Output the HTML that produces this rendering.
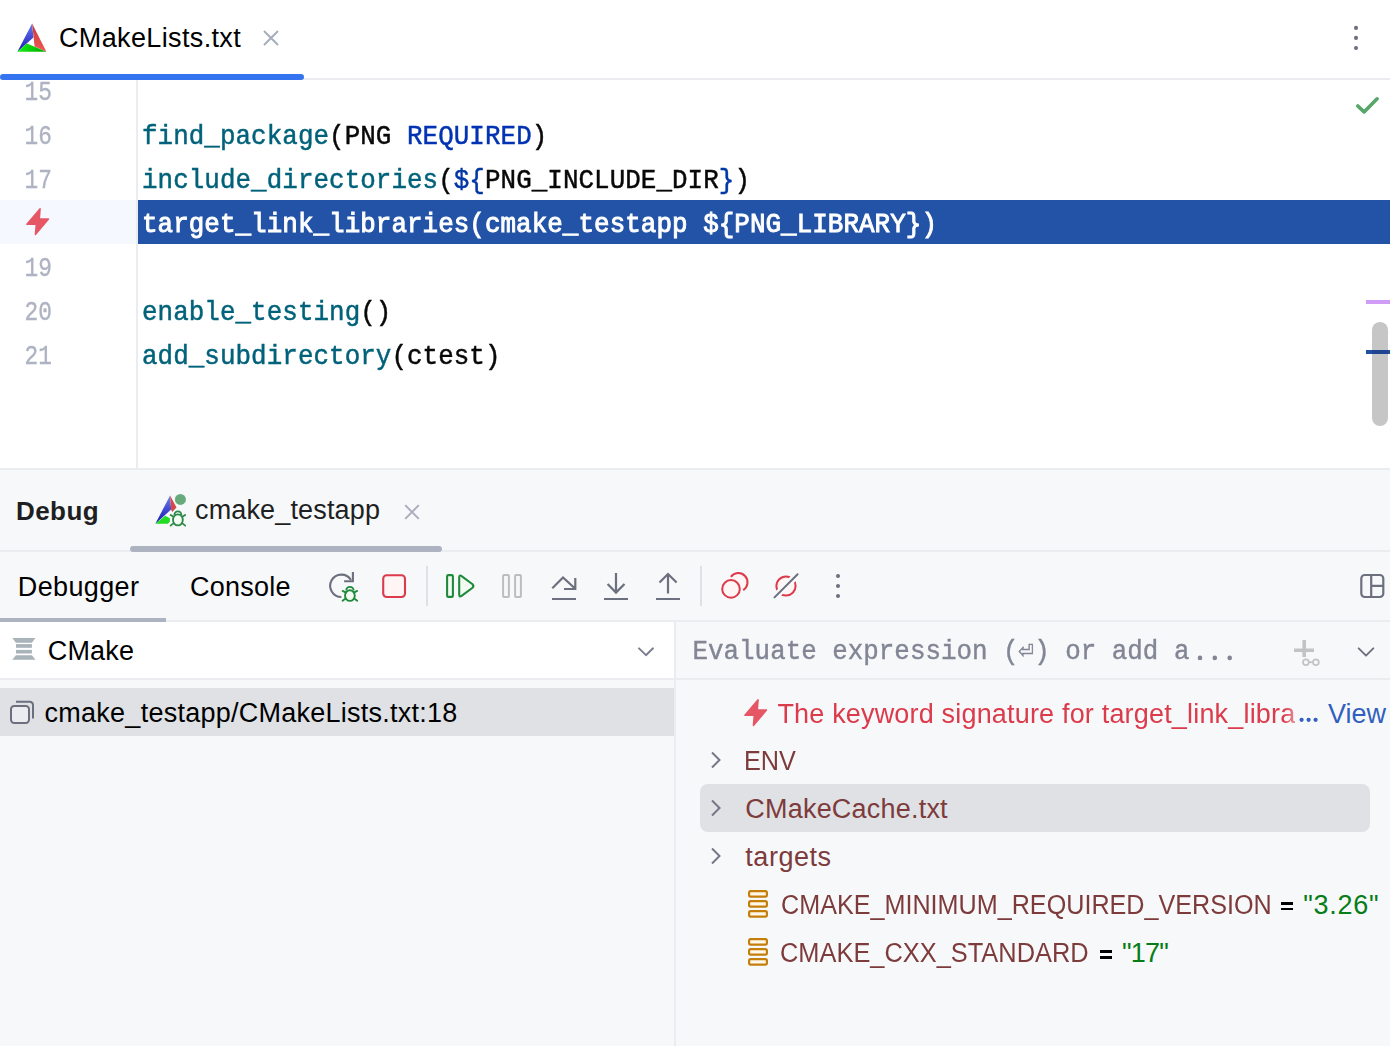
<!DOCTYPE html>
<html><head><meta charset="utf-8">
<style>
*{margin:0;padding:0;box-sizing:border-box}
html,body{width:1390px;height:1046px;overflow:hidden;background:#fff;font-family:"Liberation Sans",sans-serif;color:#000}
.abs{position:absolute}
.mono{font-family:"Liberation Mono",monospace}
#tabbar{position:absolute;z-index:2;left:0;top:0;width:1390px;height:80px;background:#fff;border-bottom:2px solid #ebecf0}
#editor{position:absolute;left:0;top:79px;width:1390px;height:390px;background:#fff}
.gutter{position:absolute;left:0;top:0;width:136px;height:390px}
.gline{position:absolute;left:136px;top:0;width:2px;height:390px;background:#ebecf0}
.ln{position:absolute;left:0;width:52px;text-align:right;transform:scale(0.88,1.05);transform-origin:51px 28.9px;-webkit-text-stroke:0.35px #aeb3c2;font-family:"Liberation Mono",monospace;font-size:25.9px;color:#aeb3c2;line-height:44px;height:44px}
.code{position:absolute;left:142px;letter-spacing:0.06px;-webkit-text-stroke:0.45px currentColor;transform:scaleY(1.08);transform-origin:0 28.9px;font-family:"Liberation Mono",monospace;font-size:25.88px;line-height:44px;height:44px;white-space:pre;color:#080808}
.fn{color:#00627a}
.kw{color:#0033b3}
.dl{color:#0037a6}
#debug{position:absolute;left:0;top:468px;width:1390px;height:578px;background:#f7f8fa;border-top:2px solid #ebecf0}
.ui{font-size:27px;white-space:pre;line-height:30px}
</style></head><body>
<div id="tabbar">
  <svg class="abs" style="left:12px;top:18px" width="40" height="40" viewBox="12 18 40 40">
    <defs>
      <linearGradient id="gb1" x1="0" y1="0" x2="0" y2="1"><stop offset="0" stop-color="#6a7cf0"/><stop offset="1" stop-color="#1a1ab4"/></linearGradient>
      <linearGradient id="gr1" x1="0" y1="0" x2="0" y2="1"><stop offset="0" stop-color="#c83838"/><stop offset="1" stop-color="#ee5858"/></linearGradient>
      <linearGradient id="gg1" x1="0" y1="0" x2="1" y2="0"><stop offset="0" stop-color="#14f014"/><stop offset="1" stop-color="#00a800"/></linearGradient>
    </defs>
    <polygon points="32.1,23.4 33.4,37.6 17.4,51.7" fill="url(#gb1)"/>
    <polygon points="32.1,23.4 46.4,51.7 34.6,46.5" fill="url(#gr1)"/>
    <polygon points="17.4,51.7 26.9,43.6 46.4,51.7" fill="url(#gg1)"/>
  </svg>
  <div class="abs ui" style="left:59px;top:23.2px;letter-spacing:0.36px;color:#000">CMakeLists.txt</div>
  <svg class="abs" style="left:262px;top:29px" width="18" height="18" viewBox="0 0 18 18"><path d="M2 2L16 16M16 2L2 16" stroke="#a8adbd" stroke-width="2"/></svg>
  <div class="abs" style="left:0;top:74px;width:304px;height:6px;background:#3574f0;border-radius:3px"></div>
  <svg class="abs" style="left:1350px;top:25px" width="12" height="28" viewBox="0 0 12 28"><circle cx="6" cy="2.9" r="2.05" fill="#6c707e"/><circle cx="6" cy="12.9" r="2.05" fill="#6c707e"/><circle cx="6" cy="23" r="2.05" fill="#6c707e"/></svg>
</div>
<div id="editor">
  <div class="abs" style="left:0;top:121px;width:136px;height:44px;background:#f5f8fe"></div>
  <div class="gline"></div>
  <div class="ln" style="top:-8.5px">15</div>
  <div class="ln" style="top:35.5px">16</div>
  <div class="ln" style="top:79.5px">17</div>
  <svg class="abs" style="left:25.2px;top:128.2px" width="26" height="30" viewBox="-1 -1 26 30"><path d="M14.1 0.8L13.3 11.1H22.5L9.4 26.5L10.3 16.2H0.9Z" fill="#e55765" stroke="#e55765" stroke-width="1.5" stroke-linejoin="round"/></svg>
  <div class="ln" style="top:167.5px">19</div>
  <div class="ln" style="top:211.5px">20</div>
  <div class="ln" style="top:255.5px">21</div>

  <div class="code" style="top:36px"><span class="fn">find_package</span>(PNG <span class="kw">REQUIRED</span>)</div>
  <div class="code" style="top:80px"><span class="fn">include_directories</span>(<span class="dl">${</span>PNG_INCLUDE_DIR<span class="dl">}</span>)</div>
  <div class="abs" style="left:138px;top:121px;width:1252px;height:44px;background:#2253a7"></div>
  <div class="code" style="top:124px;color:#fff;-webkit-text-stroke:0.9px #fff">target_link_libraries(cmake_testapp ${PNG_LIBRARY})</div>
  <div class="code" style="top:212px"><span class="fn">enable_testing</span>()</div>
  <div class="code" style="top:256px"><span class="fn">add_subdirectory</span>(ctest)</div>

  <svg class="abs" style="left:1345px;top:6px" width="45" height="40" viewBox="1345 85 45 40"><path d="M1357.8 106 L1364.1 111.9 L1377.1 98.8" stroke="#55a76a" stroke-width="3.6" fill="none" stroke-linecap="round" stroke-linejoin="round"/></svg>
  <div class="abs" style="left:1366px;top:221px;width:24px;height:3.8px;background:#cf9cf6"></div>
  <div class="abs" style="left:1372px;top:243px;width:16px;height:104px;background:#c6c6c6;border-radius:8px"></div>
  <div class="abs" style="left:1366px;top:271px;width:24px;height:3.8px;background:#2150a3"></div><div class="abs" style="left:1372px;top:271px;width:16px;height:3.8px;background:#1d4590"></div>
</div>
<div id="debug"></div>
<!-- debug header -->
<div class="abs" style="left:0;top:550px;width:1390px;height:2px;background:#ebecf0"></div>
<div class="abs ui" style="left:16px;top:495.6px;font-size:26px;font-weight:bold;letter-spacing:0.42px;color:#1e1f22">Debug</div>
<svg class="abs" style="left:150px;top:490px" width="40" height="40" viewBox="150 490 40 40">
  <defs>
    <linearGradient id="gb2" x1="0" y1="0" x2="0" y2="1"><stop offset="0" stop-color="#6e80f0"/><stop offset="1" stop-color="#1414b0"/></linearGradient>
  </defs>
  <polygon points="170.1,495.4 171.1,509.5 155.4,523.7" fill="url(#gb2)"/>
  <polygon points="170.1,495.4 176.5,507.5 172.2,512 171.1,509.5" fill="#d44848"/>
  <polygon points="155.4,523.7 165.3,515.8 169.9,518.2 169.9,521.6 167.8,523.7" fill="#22dd22"/>
  <circle cx="180.4" cy="499.4" r="5.5" fill="#67ab7d"/>
  <ellipse cx="177.9" cy="519.9" rx="4.9" ry="5.5" fill="#f2fcf3" stroke="#2a8a45" stroke-width="1.8"/>
  <path d="M174.4 514.9 A3.5 3.5 0 0 1 181.4 514.9" fill="none" stroke="#2a8a45" stroke-width="1.8"/>
  <path d="M170.6 514.9 L173.2 516.6 M185.2 514.9 L182.6 516.6 M170.6 525.6 L173.4 523.4 M185.2 525.6 L182.4 523.4" stroke="#2a8a45" stroke-width="1.8" stroke-linecap="round"/>
</svg>
<div class="abs ui" style="left:195px;top:495px;letter-spacing:0.15px;color:#1e1f22">cmake_testapp</div>
<svg class="abs" style="left:404px;top:504px" width="16" height="16" viewBox="0 0 16 16"><path d="M1.2 1.2L14.8 14.8M14.8 1.2L1.2 14.8" stroke="#a8adbd" stroke-width="1.9"/></svg>
<div class="abs" style="left:130px;top:546px;width:312px;height:6px;background:#aeb3c2;border-radius:3px"></div>
<!-- toolbar -->
<div class="abs ui" style="left:17.8px;top:572px;letter-spacing:0.37px;color:#000">Debugger</div>
<div class="abs ui" style="left:190px;top:572px;letter-spacing:0.23px;color:#000">Console</div>
<div class="abs" style="left:0;top:620px;width:1390px;height:2px;background:#ebecf0"></div>
<div class="abs" style="left:0;top:618px;width:166px;height:4px;background:#aeb3c2"></div>
<svg class="abs" style="left:0;top:551px" width="1390" height="70" viewBox="0 551 1390 70">
  <!-- rerun -->
  <path d="M341.4 597 A11.2 11.2 0 1 1 350.95 579.95" fill="none" stroke="#6c707e" stroke-width="2.1"/>
  <path d="M344.1 581.2 H352.9 V572" fill="none" stroke="#6c707e" stroke-width="2.1"/>
  <ellipse cx="349.9" cy="595.6" rx="4.9" ry="5.3" fill="#f2fcf3" stroke="#208a3c" stroke-width="1.9"/>
  <path d="M346.2 590.6 A3.7 3.7 0 0 1 353.6 590.6" fill="none" stroke="#208a3c" stroke-width="1.9"/>
  <path d="M342.6 590.9 L346 592.6 M357.2 590.9 L353.8 592.6 M342.6 600.8 L345.6 598.6 M357.2 600.8 L354.2 598.6" stroke="#208a3c" stroke-width="1.9" stroke-linecap="round"/>
  <!-- stop -->
  <rect x="383.2" y="575.2" width="21.8" height="21.8" rx="3.5" fill="#fff5f5" stroke="#db3b4b" stroke-width="2.1"/>
  <rect x="426" y="566" width="2" height="40" fill="#dfe1e5"/>
  <!-- resume -->
  <rect x="447.1" y="575.1" width="5.8" height="21.8" rx="1.2" fill="#f2fcf3" stroke="#208a3c" stroke-width="2.1"/>
  <path d="M459.2 577.5 L459.2 594.5 Q459.2 597.5 461.6 595.8 L472.5 587.8 Q474.3 586 472.5 584.2 L461.6 576.2 Q459.2 574.5 459.2 577.5Z" fill="#f2fcf3" stroke="#208a3c" stroke-width="2.1"/>
  <!-- pause disabled -->
  <rect x="503.1" y="575.1" width="5.8" height="21.8" rx="1" fill="none" stroke="#bdbdbd" stroke-width="2"/>
  <rect x="515.1" y="575.1" width="5.8" height="21.8" rx="1" fill="none" stroke="#bdbdbd" stroke-width="2"/>
  <!-- step over -->
  <path d="M552.3 588.2 L563 577.5 L575.3 588.8 M564 589 L575.3 589 L575.3 578" fill="none" stroke="#6c707e" stroke-width="2.2"/>
  <path d="M552 599 H576 M604 599 H628 M656 599 H680" stroke="#6c707e" stroke-width="2.2"/>
  <!-- step into -->
  <path d="M616 573 V593 M607.6 584 L616 592.6 L624.5 584" fill="none" stroke="#6c707e" stroke-width="2.2"/>
  <!-- step out -->
  <path d="M668 593.4 V574 M659.5 582.5 L668 574 L676.6 582.5" fill="none" stroke="#6c707e" stroke-width="2.2"/>
  <rect x="700" y="566" width="2" height="40" fill="#dfe1e5"/>
  <!-- view breakpoints -->
  <path d="M730.86 576.9 A9.2 9.2 0 1 1 743.24 590.06" fill="#fff5f5" stroke="#db3b4b" stroke-width="2"/>
  <circle cx="731" cy="588.9" r="8.8" fill="#fff5f5" stroke="#db3b4b" stroke-width="2"/>
  <!-- mute -->
  <circle cx="786" cy="586" r="9.6" fill="#fff5f5" stroke="#db3b4b" stroke-width="2"/>
  <path d="M774.5 597.4 L797.6 574.3" stroke="#f7f8fa" stroke-width="7"/>
  <path d="M774.5 597.4 L797.6 574.3" stroke="#6c707e" stroke-width="2" stroke-linecap="round"/>
  <!-- more -->
  <circle cx="838" cy="576" r="2" fill="#6c707e"/><circle cx="838" cy="586" r="2" fill="#6c707e"/><circle cx="838" cy="596" r="2" fill="#6c707e"/>
  <!-- layout -->
  <rect x="1361.3" y="575" width="22" height="22" rx="3.5" fill="none" stroke="#6c707e" stroke-width="2.2"/>
  <path d="M1371.2 575 V597 M1371.2 585.8 H1383" stroke="#6c707e" stroke-width="2.2"/>
</svg>
<!-- panels -->
<div class="abs" style="left:0;top:622px;width:674px;height:56px;background:#fff"></div>
<div class="abs" style="left:0;top:678px;width:674px;height:2px;background:#ebecf0"></div>
<div class="abs" style="left:676px;top:678px;width:714px;height:2px;background:#ebecf0"></div>
<div class="abs" style="left:674px;top:622px;width:2px;height:424px;background:#ebecf0"></div>
<svg class="abs" style="left:10px;top:636px" width="28" height="26" viewBox="0 0 28 26">
  <path d="M2.3 2.1 H25.5 L21.9 6.8 H5.9Z M2.3 23.8 H25.5 L21.9 19.2 H5.9Z" fill="#a8b3ba"/>
  <rect x="6" y="8.1" width="15.9" height="3.7" fill="#a8b3ba"/>
  <rect x="6" y="13.9" width="15.9" height="3.6" fill="#a8b3ba"/>
</svg>
<div class="abs ui" style="left:47.8px;top:635.6px;letter-spacing:0.15px;color:#000">CMake</div>
<svg class="abs" style="left:636px;top:644px" width="20" height="14" viewBox="0 0 20 14"><path d="M3 4.3L9.95 11.2L17 4.3" fill="none" stroke="#7a7e8c" stroke-width="1.9" stroke-linecap="round" stroke-linejoin="round"/></svg>
<div class="abs" style="left:0;top:688px;width:674px;height:48px;background:#dfe1e5"></div>
<svg class="abs" style="left:8px;top:698px" width="30" height="30" viewBox="0 0 30 30">
  <path d="M8 3.8 H21.5 Q25 3.8 25 7.3 V20.5" fill="none" stroke="#6c707e" stroke-width="2"/>
  <rect x="3" y="8" width="18" height="17" rx="3.2" fill="#ebecf0" stroke="#6c707e" stroke-width="2"/>
</svg>
<div class="abs ui" style="left:44.6px;top:698.4px;letter-spacing:0.25px;color:#000">cmake_testapp/CMakeLists.txt:18</div>
<!-- eval -->
<div class="abs mono" style="left:692.5px;top:636.8px;transform:scaleY(1.06);transform-origin:0 21.9px;font-size:25.88px;line-height:30px;white-space:pre;color:#818594;-webkit-text-stroke:0.4px #818594">Evaluate expression (&#x23CE;) or add a</div>
<svg class="abs" style="left:1190px;top:650px" width="50" height="16" viewBox="1190 650 50 16"><circle cx="1200" cy="657.9" r="2.3" fill="#818594"/><circle cx="1214.8" cy="657.9" r="2.3" fill="#818594"/><circle cx="1229.7" cy="657.9" r="2.3" fill="#818594"/></svg>
<svg class="abs" style="left:1290px;top:636px" width="32" height="32" viewBox="0 0 32 32">
  <path d="M4 14.2 H24 M14.2 4 V21" stroke="#c3c3c3" stroke-width="3.6"/>
  <circle cx="15.9" cy="26.2" r="2.9" fill="none" stroke="#c3c3c3" stroke-width="1.7"/>
  <circle cx="25.9" cy="26.2" r="2.9" fill="none" stroke="#c3c3c3" stroke-width="1.7"/>
  <path d="M18.8 26.2 H23" stroke="#c3c3c3" stroke-width="1.7"/>
</svg>
<svg class="abs" style="left:1356px;top:645px" width="20" height="14" viewBox="0 0 20 14"><path d="M2.7 3.3L10 10.6L17.3 3.3" fill="none" stroke="#6c707e" stroke-width="1.9" stroke-linecap="round" stroke-linejoin="round"/></svg>
<!-- tree -->
<svg class="abs" style="left:743px;top:697.5px" width="26" height="30" viewBox="-1 -1 26 30"><path d="M14.1 0.8L13.3 11.1H22.5L9.4 26.5L10.3 16.2H0.9Z" fill="#e55765" stroke="#e55765" stroke-width="1.5" stroke-linejoin="round"/></svg>
<div class="abs ui" style="left:777.4px;top:698.6px;letter-spacing:0.18px;color:#db3b4b;-webkit-mask-image:linear-gradient(to right,#000 507px,rgba(0,0,0,0.45) 521px)">The keyword signature for target_link_libra</div>
<svg class="abs" style="left:1295px;top:712px" width="26" height="14" viewBox="1295 712 26 14"><circle cx="1301.6" cy="719.8" r="2.1" fill="#315fbd"/><circle cx="1308.6" cy="719.8" r="2.1" fill="#315fbd"/><circle cx="1315.6" cy="719.8" r="2.1" fill="#315fbd"/></svg>
<div class="abs ui" style="left:1328px;top:698.6px;color:#315fbd">View</div>
<div class="abs" style="left:700px;top:784px;width:670px;height:48px;background:#dfe1e5;border-radius:8px"></div>
<svg class="abs" style="left:706.5px;top:748px" width="20" height="120" viewBox="0 0 20 120">
  <path d="M5 4.5L12.5 12L5 19.5 M5 52.5L12.5 60L5 67.5 M5 100.5L12.5 108L5 115.5" fill="none" stroke="#747886" stroke-width="2"/>
</svg>
<div class="abs ui" style="left:743.7px;top:746.2px;transform:scaleX(0.936);transform-origin:0 0;color:#7d3b3b">ENV</div>
<div class="abs ui" style="left:745.3px;top:793.6px;letter-spacing:0.21px;color:#7d3b3b">CMakeCache.txt</div>
<div class="abs ui" style="left:745.3px;top:841.6px;letter-spacing:0.54px;color:#7d3b3b">targets</div>
<svg class="abs" style="left:746px;top:888px" width="24" height="82" viewBox="0 0 24 82">
  <g fill="#fff8e6" stroke="#c47e0c" stroke-width="2.2">
    <rect x="3.1" y="3.2" width="17.8" height="5.5" rx="1.6"/><rect x="3.1" y="13.2" width="17.8" height="5.5" rx="1.6"/><rect x="3.1" y="23.2" width="17.8" height="5.5" rx="1.6"/>
    <rect x="3.1" y="51.2" width="17.8" height="5.5" rx="1.6"/><rect x="3.1" y="61.2" width="17.8" height="5.5" rx="1.6"/><rect x="3.1" y="71.2" width="17.8" height="5.5" rx="1.6"/>
  </g>
</svg>
<div class="abs ui" style="left:780.6px;top:890px;transform:scaleX(0.932);transform-origin:0 0;color:#7d3b3b">CMAKE_MINIMUM_REQUIRED_VERSION</div>
<div class="abs" style="left:1280.8px;top:902.1px;width:11.8px;height:2.5px;background:#000"></div>
<div class="abs" style="left:1280.8px;top:907.9px;width:11.8px;height:2.5px;background:#000"></div>
<div class="abs ui" style="left:1303.2px;top:890px;letter-spacing:0.75px;color:#067d17">"3.26"</div>
<div class="abs ui" style="left:780.4px;top:938px;transform:scaleX(0.9407);transform-origin:0 0;color:#7d3b3b">CMAKE_CXX_STANDARD</div>
<div class="abs" style="left:1099.8px;top:950.4px;width:11.8px;height:2.5px;background:#000"></div>
<div class="abs" style="left:1099.8px;top:956.2px;width:11.8px;height:2.5px;background:#000"></div>
<div class="abs ui" style="left:1122px;top:938px;letter-spacing:-0.77px;color:#067d17">"17"</div>

</body></html>
